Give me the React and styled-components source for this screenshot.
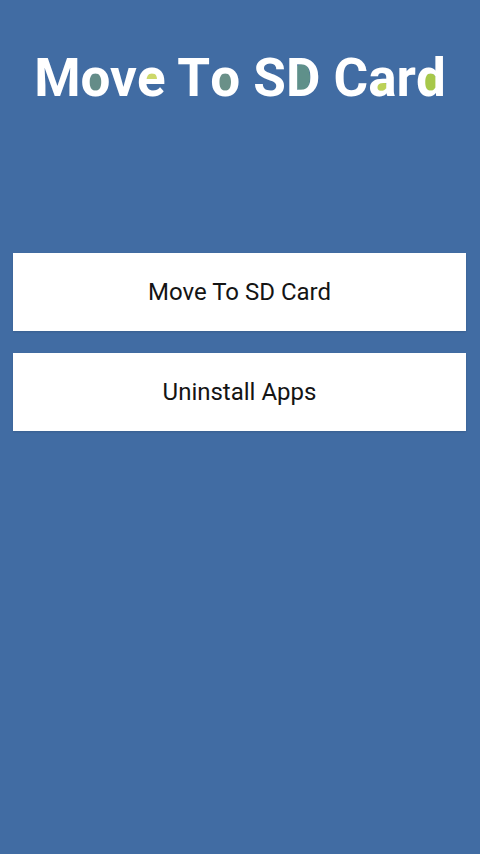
import styled, {createGlobalStyle} from "styled-components";

const GlobalStyle = createGlobalStyle`
	html, body {
		margin: 0;
		padding: 0;
		background: #416ca3;
	}
	#root {
		min-height: 100vh;
	}
`;

const Screen = styled.div`
	min-height: 854px;
	background: #416ca3;
	display: flex;
	flex-direction: column;
	font-family: Roboto, "Noto Sans", sans-serif;
`;

const Title = styled.h1`
	position: relative;
	isolation: isolate;
	margin: 0;
	padding-top: 47px;
	text-align: center;
	font-size: 53px;
	font-weight: 700;
	line-height: 62px;
	color: #ffffff;
`;

// a letter whose hole (counter) is filled with a colour
const Tint = styled.span`
	position: relative;

	&::before {
		content: "";
		position: absolute;
		z-index: -1;
		left: ${(p) => p.$x}px;
		top: ${(p) => p.$y}px;
		width: ${(p) => p.$w}px;
		height: ${(p) => p.$h}px;
		border-radius: 45%;
		background: ${(p) => p.$fill};
	}
`;

const Actions = styled.div`
	display: flex;
	flex-direction: column;
	gap: 22px;
	padding: 0 14px 0 13px;
	margin-top: 144px;
`;

const ActionButton = styled.button`
	height: 78px;
	border: none;
	border-radius: 0;
	background: #ffffff;
	color: #141414;
	font-family: Roboto, "Noto Sans", sans-serif;
	font-size: 24px;
	font-weight: 400;
	cursor: pointer;
	box-shadow: 0 1px 2px rgba(0, 0, 0, 0.12);
`;

export default function App() {
	return (
		<>
			<GlobalStyle />
			<Screen>
				<Title>
					M<Tint $fill="#648c88" $x={8} $y={26} $w={14} $h={20}>o</Tint>v
					<Tint $fill="#cdd86a" $x={8} $y={25} $w={13} $h={9}>e</Tint> T
					<Tint $fill="#6a9088" $x={8} $y={26} $w={14} $h={20}>o</Tint> S
					<Tint $fill="#5f908a" $x={8} $y={17} $w={16} $h={27}>D</Tint> C
					<Tint $fill="#bcd156" $x={6} $y={34} $w={13} $h={12}>a</Tint>r
					<Tint $fill="#a7c84a" $x={7} $y={26} $w={14} $h={20}>d</Tint>
				</Title>
				<Actions>
					<ActionButton>Move To SD Card</ActionButton>
					<ActionButton>Uninstall Apps</ActionButton>
				</Actions>
			</Screen>
		</>
	);
}
